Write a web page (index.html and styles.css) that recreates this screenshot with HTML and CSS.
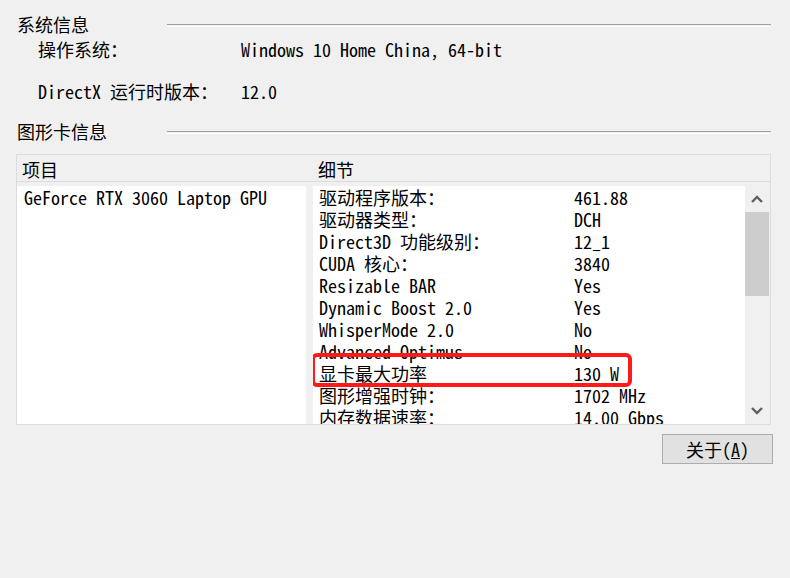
FILE: index.html
```html
<!DOCTYPE html>
<html lang="zh-CN">
<head>
<meta charset="utf-8">
<title>系统信息</title>
<link rel="stylesheet" href="styles.css">
</head>
<body>
<div class="page">
  <div class="section-head s1">
    <span class="section-title">系统信息</span>
    <span class="etch"></span>
  </div>
  <div class="info">
    <div class="info-row"><span class="info-label">操作系统：</span><span class="info-value">Windows 10 Home China, 64-bit</span></div>
    <div class="info-row"><span class="info-label">DirectX 运行时版本：</span><span class="info-value">12.0</span></div>
  </div>
  <div class="section-head s2">
    <span class="section-title">图形卡信息</span>
    <span class="etch"></span>
  </div>
  <div class="panel">
    <div class="panel-head">
      <span class="col-left">项目</span>
      <span class="col-right">细节</span>
    </div>
    <div class="panel-body">
      <div class="list-left">
        <div class="row">GeForce RTX 3060 Laptop GPU</div>
      </div>
      <div class="list-right">
        <div class="rows">
          <div class="row"><span class="k">驱动程序版本：</span><span>461.88</span></div>
          <div class="row"><span class="k">驱动器类型：</span><span>DCH</span></div>
          <div class="row"><span class="k">Direct3D 功能级别：</span><span>12_1</span></div>
          <div class="row"><span class="k">CUDA 核心：</span><span>3840</span></div>
          <div class="row"><span class="k">Resizable BAR</span><span>Yes</span></div>
          <div class="row"><span class="k">Dynamic Boost 2.0</span><span>Yes</span></div>
          <div class="row"><span class="k">WhisperMode 2.0</span><span>No</span></div>
          <div class="row"><span class="k">Advanced Optimus</span><span>No</span></div>
          <div class="row"><span class="k">显卡最大功率</span><span>130 W</span></div>
          <div class="row"><span class="k">图形增强时钟：</span><span>1702 MHz</span></div>
          <div class="row"><span class="k">内存数据速率：</span><span>14.00 Gbps</span></div>
        </div>
        <div class="highlight"></div>
      </div>
      <div class="scrollbar">
        <div class="sb-btn">
          <svg width="12" height="8" viewBox="0 0 12 8"><path d="M1 7 L6 2 L11 7" fill="none" stroke="#606060" stroke-width="2.4"/></svg>
        </div>
        <div class="sb-thumb"></div>
        <div class="sb-track"></div>
        <div class="sb-btn">
          <svg width="12" height="8" viewBox="0 0 12 8"><path d="M1 1 L6 6 L11 1" fill="none" stroke="#606060" stroke-width="2.4"/></svg>
        </div>
      </div>
    </div>
  </div>
  <div class="actions">
    <button class="btn">关于(<u>A</u>)</button>
  </div>
</div>
</body>
</html>
```
FILE: styles.css
```css
html, body {
  margin: 0;
  padding: 0;
  background: #f0f0f0;
}
body {
  font-family: "Noto Sans Mono CJK SC", "Liberation Mono", "Noto Sans CJK SC", monospace;
  font-size: 18px;
  color: #000;
  width: 790px;
  height: 578px;
  overflow: hidden;
}
.page {
  display: flex;
  flex-direction: column;
}
.section-head {
  display: flex;
  align-items: center;
  height: 22px;
  line-height: 22px;
  padding-left: 17px;
  padding-right: 19px;
}
.s1 { margin-top: 13px; }
.s2 { margin-top: 18px; }
.section-title {
  width: 150px;
  white-space: nowrap;
}
.etch {
  flex: 1;
  height: 1px;
  border-top: 1px solid #a0a0a0;
  border-bottom: 1px solid #ffffff;
  margin-top: 2px;
}
.info {
  display: flex;
  flex-direction: column;
  gap: 20px;
  margin-top: 3px;
  padding-left: 38px;
}
.info-row {
  display: flex;
  height: 22px;
  line-height: 22px;
  white-space: nowrap;
}
.info-label {
  width: 203px;
}
.panel {
  margin: 12px 19px 0 16px;
  border: 1px solid #dcdcdc;
  height: 269px;
  display: flex;
  flex-direction: column;
}
.panel-head {
  height: 26px;
  line-height: 28px;
  border-bottom: 1px solid #dcdcdc;
  display: flex;
}
.col-left {
  width: 296px;
  padding-left: 5px;
}
.panel-body {
  flex: 1;
  display: flex;
  padding-top: 4px;
  min-height: 0;
}
.list-left {
  width: 289px;
  background: #fff;
  padding-left: 7px;
  box-sizing: border-box;
}
.list-right {
  position: relative;
  margin-left: 7px;
  width: 432px;
  background: #fff;
  overflow: hidden;
}
.rows {
  padding-left: 6px;
}
.row {
  height: 22px;
  line-height: 22px;
  white-space: nowrap;
  display: flex;
}
.k {
  width: 255px;
  flex: none;
}
.highlight {
  position: absolute;
  left: -2px;
  top: 167px;
  width: 321px;
  height: 34px;
  box-sizing: border-box;
  border: 4px solid #ff1a1a;
  border-radius: 6px;
}
.scrollbar {
  width: 24px;
  display: flex;
  flex-direction: column;
  background: #f0f0f0;
}
.sb-btn {
  height: 26px;
  display: flex;
  align-items: center;
  justify-content: center;
}
.sb-thumb {
  height: 84px;
  background: #cdcdcd;
}
.sb-track {
  flex: 1;
}
.actions {
  display: flex;
  justify-content: flex-end;
  padding-right: 17px;
  margin-top: 9px;
}
.btn {
  width: 111px;
  height: 30px;
  background: #e1e1e1;
  border: 1px solid #adadad;
  font-family: inherit;
  font-size: 18px;
  color: #000;
  padding: 0;
  line-height: 26px;
}
```
